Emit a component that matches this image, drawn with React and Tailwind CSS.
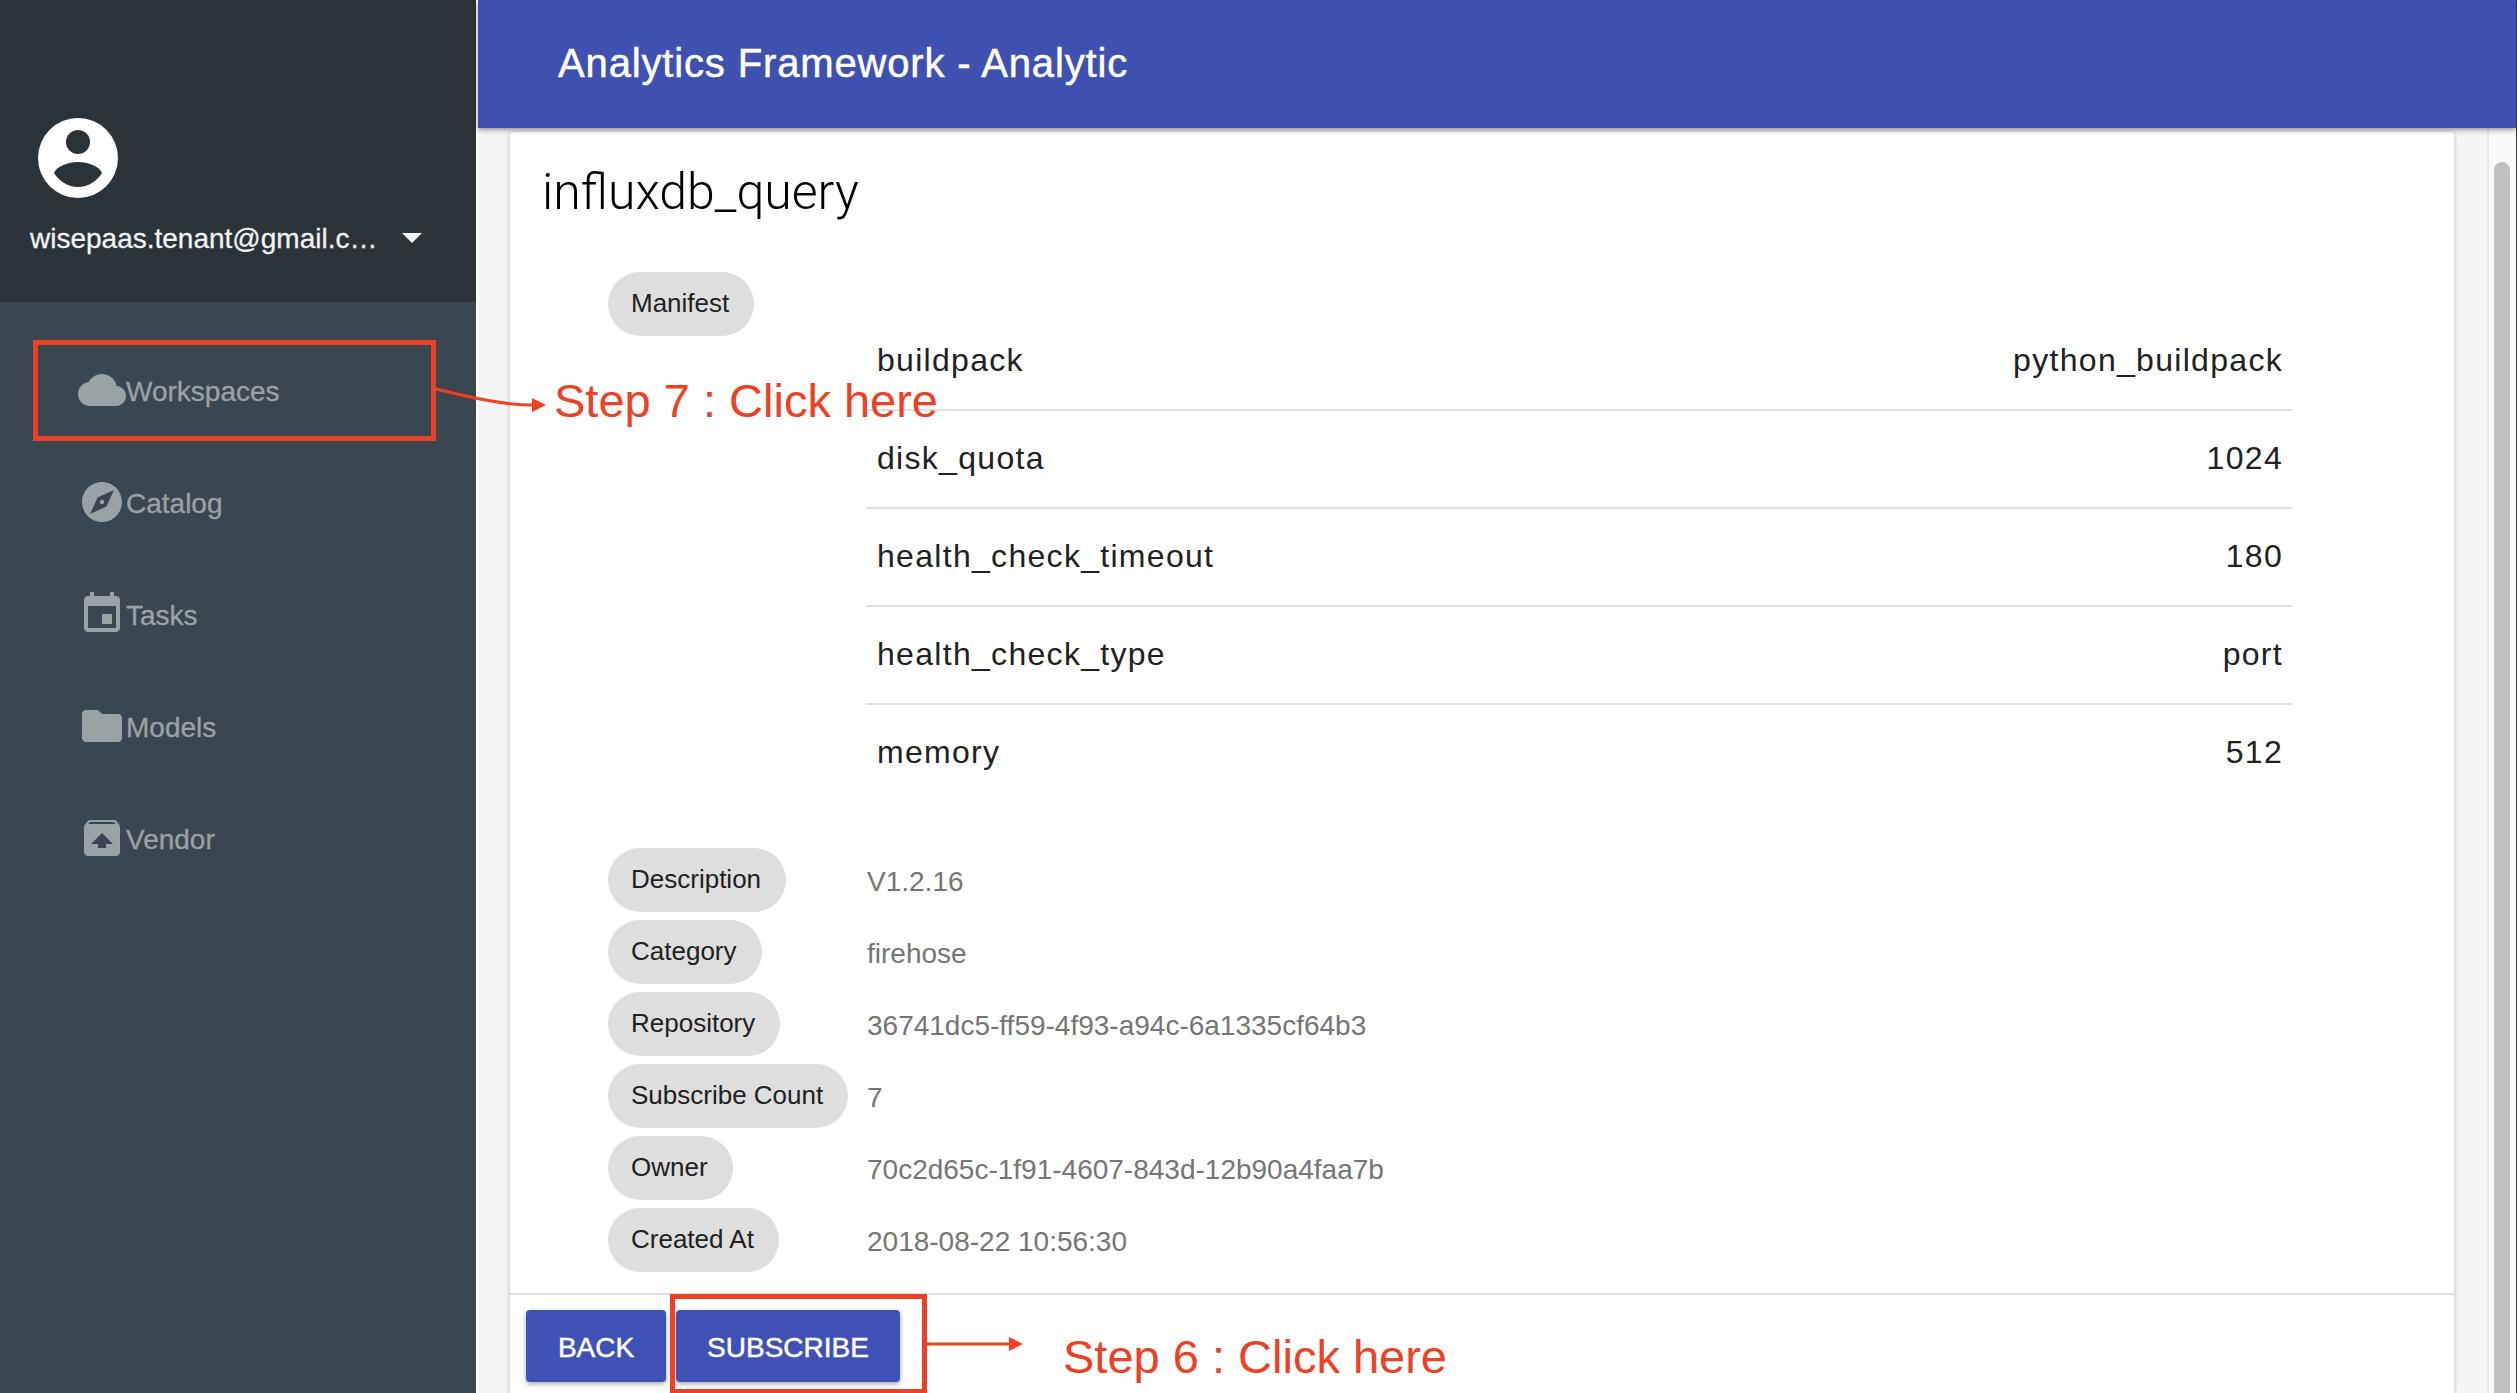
const icons = {
  cloud: 'M19.35 10.04C18.67 6.59 15.64 4 12 4 9.11 4 6.6 5.64 5.35 8.04 2.34 8.36 0 10.91 0 14c0 3.31 2.69 6 6 6h13c2.76 0 5-2.24 5-5 0-2.64-2.05-4.78-4.65-4.96z',
  explore: 'M12 10.9c-.61 0-1.1.49-1.1 1.1s.49 1.1 1.1 1.1c.61 0 1.1-.49 1.1-1.1s-.49-1.1-1.1-1.1zM12 2C6.48 2 2 6.48 2 12s4.48 10 10 10 10-4.48 10-10S17.52 2 12 2zm2.19 12.19L6 18l3.81-8.19L18 6l-3.81 8.19z',
  event: 'M17 12h-5v5h5v-5zM16 1v2H8V1H6v2H5c-1.11 0-1.99.9-1.99 2L3 19c0 1.1.89 2 2 2h14c1.1 0 2-.9 2-2V5c0-1.1-.9-2-2-2h-1V1h-2zm3 18H5V8h14v11z',
  folder: 'M10 4H4c-1.1 0-1.99.9-1.99 2L2 18c0 1.1.9 2 2 2h16c1.1 0 2-.9 2-2V8c0-1.1-.9-2-2-2h-8l-2-2z',
  unarchive: 'M20.55 5.22l-1.39-1.68C18.88 3.21 18.47 3 18 3H6c-.47 0-.88.21-1.15.55L3.46 5.22C3.17 5.57 3 6.01 3 6.5V19c0 1.1.89 2 2 2h14c1.1 0 2-.9 2-2V6.5c0-.49-.17-.93-.45-1.28zM12 9.5l5.5 5.5H14v2h-4v-2H6.5L12 9.5zM5.12 5l.82-1h12l.93 1H5.12z',
}

const nav = [
  ['Workspaces', 'cloud'],
  ['Catalog', 'explore'],
  ['Tasks', 'event'],
  ['Models', 'folder'],
  ['Vendor', 'unarchive'],
]

const manifest = [
  ['buildpack', 'python_buildpack'],
  ['disk_quota', '1024'],
  ['health_check_timeout', '180'],
  ['health_check_type', 'port'],
  ['memory', '512'],
]

const details = [
  ['Description', 'V1.2.16'],
  ['Category', 'firehose'],
  ['Repository', '36741dc5-ff59-4f93-a94c-6a1335cf64b3'],
  ['Subscribe Count', '7'],
  ['Owner', '70c2d65c-1f91-4607-843d-12b90a4faa7b'],
  ['Created At', '2018-08-22 10:56:30'],
]

function Chip({ children }) {
  return (
    <span className="inline-flex h-16 w-fit items-center rounded-[32px] bg-[#dedede] pb-[1px] pl-[23px] pr-[25px] text-[26px] text-[#212121]">
      {children}
    </span>
  )
}

function Sidebar() {
  return (
    <aside className="flex w-[476px] shrink-0 flex-col bg-[#3b4750]">
      <div className="h-[302px] bg-[#2b3238] pl-[30px] pt-[118px]">
        <svg viewBox="0 0 80 80" className="ml-2 h-20 w-20">
          <circle cx="40" cy="40" r="40" fill="#fff" />
          <circle cx="40" cy="24" r="12" fill="#2b3238" />
          <path d="M16 55c3-7 14-11 24-11s21 4 24 11c-5 8-14 14-24 14s-19-6-24-14z" fill="#2b3238" />
        </svg>
        <div className="mt-[20px] flex h-10 items-center text-[28px] text-[#f2f3f4]">
          <span className="w-[372px] pt-[2px] [-webkit-text-stroke:0.3px_#f2f3f4]">wisepaas.tenant@gmail.c…</span>
          <span className="h-0 w-0 border-x-[10px] border-t-[10px] border-x-transparent border-t-[#f2f3f4]" />
        </div>
      </div>
      <nav className="pl-[78px] pt-8">
        {nav.map(([label, icon]) => (
          <div key={label} className="flex h-[112px] items-center text-[28px] text-[#9aa2a6]">
            <svg viewBox="0 0 24 24" className="h-12 w-12 fill-current">
              <path d={icons[icon]} />
            </svg>
            <span className="pt-[3px] [-webkit-text-stroke:0.3px_#9aa2a6]">{label}</span>
          </div>
        ))}
      </nav>
    </aside>
  )
}

function Card() {
  return (
    <div className="flex h-[1261px] w-[1944px] flex-col rounded-t-[4px] bg-white pt-7 shadow-[0_1px_5px_rgba(0,0,0,0.25)]">
      <div className="pl-[32px]">
        <h1 className="h-16 text-[50px] font-light leading-[64px] text-black [font-family:Roboto,sans-serif]">influxdb_query</h1>
        <div className="ml-[66px] mt-12 flex">
          <Chip>Manifest</Chip>
        </div>
        <div className="ml-[324px] mt-[-23px] w-[1426px]">
          {manifest.map(([k, v], i) => (
            <div
              key={k}
              className={`flex h-[98px] items-center justify-between pl-[11px] pr-[9px] text-[32px] tracking-[1.3px] text-[#212121] ${i < 4 ? 'border-b-2 border-[#e0e0e0] pb-[3px]' : 'pb-[5px]'}`}
            >
              <span>{k}</span>
              <span>{v}</span>
            </div>
          ))}
        </div>
        <div className="ml-[66px] mt-[45px] flex flex-col gap-2">
          {details.map(([k, v]) => (
            <div key={k} className="grid h-16 grid-cols-[259px_1fr] items-center">
              <Chip>{k}</Chip>
              <span className="pt-[3px] text-[28px] text-[#757575]">{v}</span>
            </div>
          ))}
        </div>
      </div>
      <div className="mt-[21px] flex gap-[10px] border-t-2 border-[#e0e0e0] pl-4 pt-[15px]">
        <button className="h-[72px] w-[140px] rounded-[4px] bg-[#3f51b5] pt-[3px] text-[28px] text-white shadow-[0_2px_5px_rgba(0,0,0,0.35)] [-webkit-text-stroke:0.5px_white]">BACK</button>
        <button className="h-[72px] w-[224px] rounded-[4px] bg-[#3f51b5] pt-[3px] text-[28px] text-white shadow-[0_2px_5px_rgba(0,0,0,0.35)] [-webkit-text-stroke:0.5px_white]">SUBSCRIBE</button>
      </div>
    </div>
  )
}

// red tutorial marks drawn over the page
function Annotations() {
  return (
    <>
      <div className="absolute left-[33px] top-[340px] h-[101px] w-[403px] border-[5px] border-[#ee4024]" />
      <div className="absolute left-[670px] top-[1294px] h-[99px] w-[257px] border-[5px] border-b-[4px] border-[#ee4024]" />
      <svg className="absolute left-[430px] top-[380px]" width="130" height="40" fill="none">
        <path d="M6 9C40 17 70 25 104 25" stroke="#ee4024" strokeWidth="3" />
        <path d="M116 25L102 18V32Z" fill="#ee4024" />
      </svg>
      <svg className="absolute left-[925px] top-[1330px]" width="100" height="28" fill="none">
        <path d="M2 14H88" stroke="#ee4024" strokeWidth="3" />
        <path d="M98 14L84 7V21Z" fill="#ee4024" />
      </svg>
      <div className="absolute left-[554px] top-[373px] text-[47px] leading-[56px] text-[#ee4024]">Step 7 : Click here</div>
      <div className="absolute left-[1063px] top-[1329px] text-[47px] leading-[56px] text-[#ee4024]">Step 6 : Click here</div>
    </>
  )
}

export default function App() {
  return (
    <div className="relative flex h-[1393px] w-[2517px] overflow-hidden bg-white [font-family:'Liberation_Sans',Arial,sans-serif]">
      <Sidebar />
      <main className="ml-[2px] flex min-w-0 flex-1 flex-col border-r border-[#3a3a3a]">
        <header className="relative z-10 flex h-32 shrink-0 items-center bg-[#3f51b0] pb-[3px] pl-20 text-[40px] tracking-[0.85px] text-white shadow-[0_2px_5px_rgba(0,0,0,0.4)] [-webkit-text-stroke:0.5px_white]">
          Analytics Framework - Analytic
        </header>
        <div className="flex min-h-0 flex-1">
          <div className="w-[2009px] bg-[#f5f5f5] pl-8 pt-1">
            <Card />
          </div>
          <div className="flex-1 border-l-2 border-[#e8e8e8] bg-[#fafafa] pl-[5px] pt-[34px]">
            <div className="h-full w-4 rounded-t-lg bg-[#c1c1c1]" />
          </div>
        </div>
      </main>
      <Annotations />
    </div>
  )
}
